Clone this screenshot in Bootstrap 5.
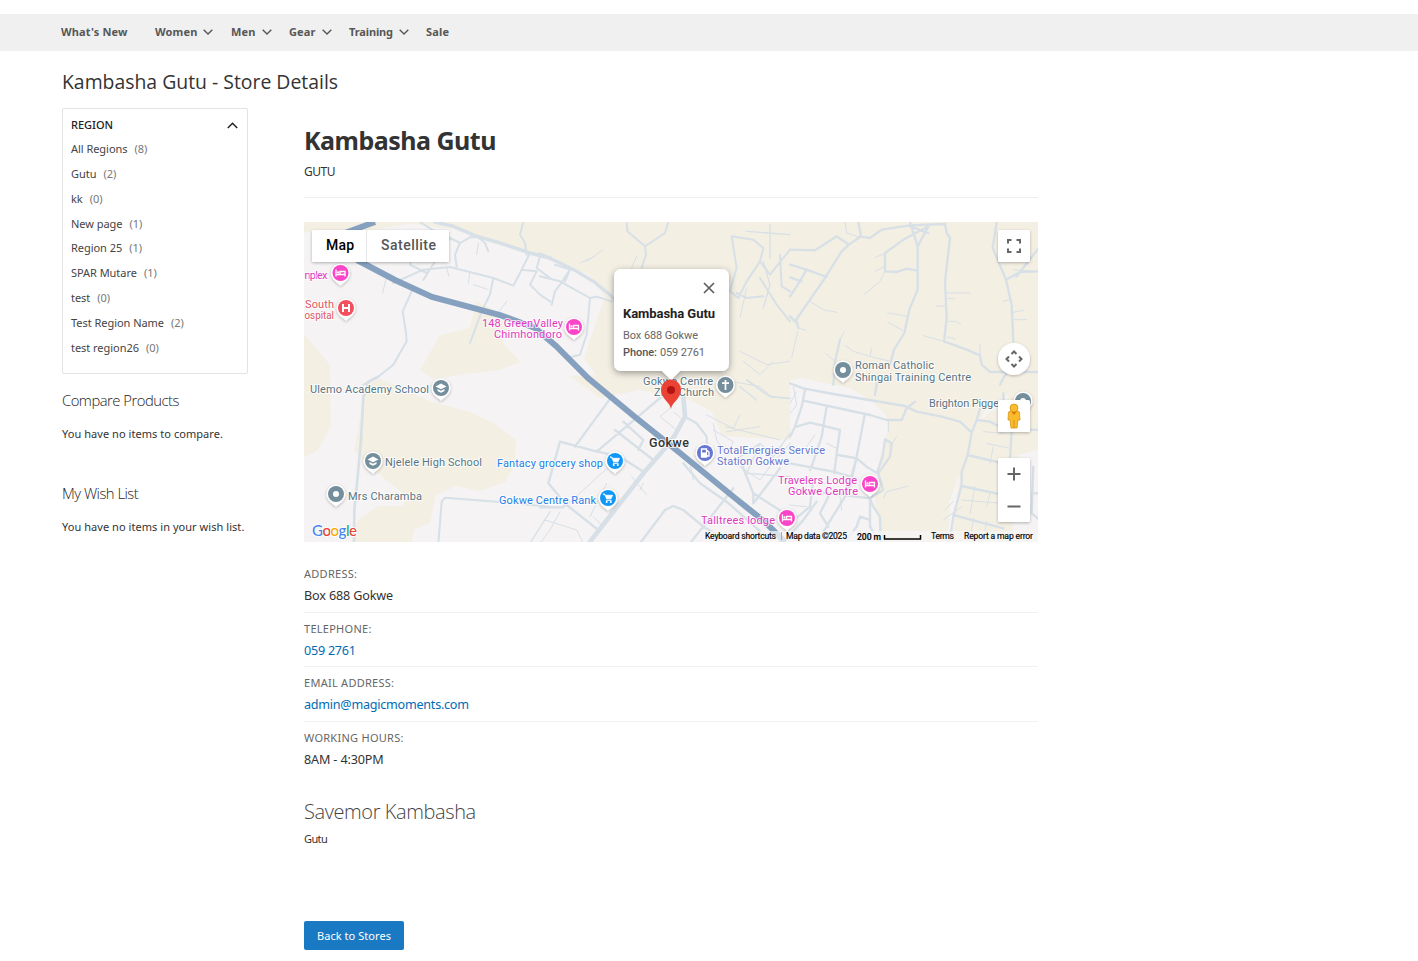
<!DOCTYPE html>
<html lang="en">
<head>
<meta charset="utf-8">
<title>Kambasha Gutu - Store Details</title>
<link rel="stylesheet" href="https://cdn.jsdelivr.net/npm/bootstrap@5.3.0/dist/css/bootstrap.min.css">
<style>
body{font:11px/16px "Noto Sans","Open Sans",sans-serif;color:#333;background:#fff;overflow:hidden}
.topnav{background:#f0f0f0;height:37px;margin-top:14px;padding:0 0 2px 61px;font-weight:700;color:#575757}
.topnav a{color:inherit;text-decoration:none;display:flex;align-items:center;letter-spacing:.15px}
.topnav svg{width:10px;height:6px;margin-left:6px}
.topnav .w-train{letter-spacing:-.12px}
.w-new{width:94px}.w-women{width:76px}.w-men{width:58px}.w-gear{width:60px}.w-train{width:77px}
.page-title{font:400 19.4px/30px "Open Sans","Noto Sans",sans-serif;letter-spacing:0;margin:16px 0 11px}
.wrap{padding-left:62px}
.side{width:186px;margin-right:56px}
.regions{border:1px solid #e3e3e3;border-radius:2px;height:266px;padding:8px;margin-bottom:14px}
.regions .hd{color:#222;font-weight:500;padding-right:1px}
.regions ul{list-style:none;padding:0;margin:4px 0 0}
.regions li{height:24.85px;line-height:24.85px;color:#444;letter-spacing:-.04px}
.regions li i{font-style:normal;color:#777;margin-left:7px}
.side h2{font:300 14.8px/24px "Open Sans","Noto Sans",sans-serif;letter-spacing:-.5px;margin:0 0 14px;color:#222}
.side p{margin:0;letter-spacing:.05px}
.side p.cmp{margin-bottom:39px}
.main{width:734px;padding-top:14px}
.main h1{font-size:25px;line-height:36px;font-weight:700;letter-spacing:-.5px;margin:0 0 3px}
.town{font-size:12px;line-height:20px;height:37px;letter-spacing:-.49px;padding-top:1px;border-bottom:1px solid #eee}
.mapbox{margin:24px 0 16px;height:320px;position:relative}
.fact{height:54.7px;border-bottom:1px solid #f1f1f1;padding-top:8px}
.fact:last-of-type{border:0}
.fact .k{color:#666;line-height:16px;letter-spacing:.27px}
.fact .v{font-size:12.6px;line-height:20px;margin-top:4px;letter-spacing:-.15px}
.fact .v a{color:#006bb4;text-decoration:none;letter-spacing:-.25px}
.sub{font:300 20px/32px "Open Sans","Noto Sans",sans-serif;letter-spacing:-.4px;color:#444;margin:19px 0 3px}
.sub-town{letter-spacing:-.6px}
.back{background:#1979c3;color:#fff;width:100px;height:29px;border-radius:2px;font-size:11px;line-height:29px;padding:0;border:0;margin-top:74px;letter-spacing:.05px}
.road{fill:none;stroke:#d7e0e6;stroke-linejoin:round;stroke-linecap:round}
.lbl{font:400 11px Roboto,sans-serif;paint-order:stroke;stroke:#fff;stroke-width:2px;stroke-opacity:.75}
.ctl{font-family:Roboto,sans-serif}
.foot{font:8.6px Roboto,sans-serif;fill:#000}
</style>
</head>
<body>
<nav class="topnav d-flex align-items-center">
<a class="w-new" href="#" >What's New</a>
<a class="w-women" href="#">Women<svg viewBox="0 0 10 6"><path d="M.7.7 5 5 9.3.7" fill="none" stroke="#575757" stroke-width="1.4"/></svg></a>
<a class="w-men" href="#">Men<svg viewBox="0 0 10 6"><path d="M.7.7 5 5 9.3.7" fill="none" stroke="#575757" stroke-width="1.4"/></svg></a>
<a class="w-gear" href="#">Gear<svg viewBox="0 0 10 6"><path d="M.7.7 5 5 9.3.7" fill="none" stroke="#575757" stroke-width="1.4"/></svg></a>
<a class="w-train" href="#">Training<svg viewBox="0 0 10 6"><path d="M.7.7 5 5 9.3.7" fill="none" stroke="#575757" stroke-width="1.4"/></svg></a>
<a href="#">Sale</a>
</nav>
<div class="wrap">
<div class="page-title">Kambasha Gutu - Store Details</div>
<div class="d-flex">
<aside class="side">
<div class="regions">
<div class="hd d-flex justify-content-between align-items-center">REGION<svg width="11" height="7" viewBox="0 0 11 7"><path d="M.8 6 5.500 1.300 10.200 6" fill="none" stroke="#222" stroke-width="1.5"/></svg></div>
<ul>
<li>All Regions<i>(8)</i></li><li>Gutu<i>(2)</i></li><li>kk<i>(0)</i></li><li>New page<i>(1)</i></li><li>Region 25<i>(1)</i></li><li>SPAR Mutare<i>(1)</i></li><li>test<i>(0)</i></li><li>Test Region Name<i>(2)</i></li><li>test region26<i>(0)</i></li>
</ul></div>
<h2>Compare Products</h2>
<p class="cmp">You have no items to compare.</p>
<h2>My Wish List</h2>
<p>You have no items in your wish list.</p>
</aside>
<main class="main">
<h1>Kambasha Gutu</h1>
<div class="town">GUTU</div>
<div class="mapbox">
<svg class="d-block" width="734" height="320" viewBox="304 222 734 320">
<defs>
<filter id="sh" x="-20%" y="-20%" width="140%" height="150%"><feDropShadow dx="0" dy="1" stdDeviation="1.500" flood-opacity=".28"/></filter>
<filter id="sh2" x="-20%" y="-20%" width="140%" height="150%"><feDropShadow dx="0" dy="2" stdDeviation="3.500" flood-opacity=".38"/></filter>
<path id="drop" d="M0 13C-2 10-9.500 7-9.500 0a9.500 9.500 0 1 1 19 0C9.500 7 2 10 0 13z" fill="#fff" filter="url(#sh)"/>
<g id="bed"><use href="#drop"/><circle r="8" fill="#fb45c8"/><path d="M-4.500-3.500V3.500M-4.500 1.500H4.500V3.500M4.500 1.500V-1.500H-.5V1M-2.500-.8v.1" fill="none" stroke="#fff" stroke-width="1.300"/><circle cx="-2.500" cy="-.7" r="1.100" fill="#fff"/></g>
<g id="school"><use href="#drop"/><circle r="8" fill="#748e9b"/><path d="M0-4.500-5.500-1.500 0 1.300 5.500-1.500z" fill="#fff"/><path d="M-3.500 1V3L0 4.800 3.500 3V1L0 2.800z" fill="#fff"/></g>
<g id="place"><use href="#drop"/><circle r="8" fill="#748e9b"/><circle r="3" fill="#fff"/></g>
<g id="shop"><use href="#drop"/><circle r="8" fill="#1198f6"/><path d="M-5-4H-3.200L-1.500.8H3L4.500-2.700H-2.500z" fill="#fff" stroke="#fff" stroke-width=".8"/><path d="M-2 2.300H3.500" stroke="#fff"/><circle cx="-1.300" cy="4" r="1" fill="#fff"/><circle cx="2.800" cy="4" r="1" fill="#fff"/></g>
</defs>
<rect x="304" y="222" width="734" height="320" fill="#f5f3f4"/>
<g fill="#f4efe3">
<path d="M304 222H420L358 232 304 232z"/>
<path d="M398 222H1038V450L1018 455 1012 542H952L960 470 972 430 990 412 1008 405V395L985 410 975 430 950 500 948 542H882L875 500 879 460 888 430 886 415 872 402 850 388 800 378 790 381V440L722 436 712 412 690 400 640 390 600 398 570 376 596 375 584 358 600 310 605 298 590 275 540 256 460 230z"/>
<path d="M304 334 330 365 331 425 318 450 304 457z"/>
<path d="M440 335 470 328 476 301 494 310 508 330 502 342 520 362 500 370 466 374 432 379 420 370z"/>
<path d="M366 385 380 379 432 402 470 412 495 424 516 440 515 465 505 482 480 491 456 486 436 495 430 523 414 530 412 542H352L358 520 378 506H404V494L380 475 362 460 354 450z"/>
</g>
<!-- north-west streets -->
<g class="road" transform="translate(300 218) scale(.33333)" stroke-width="6">
<path stroke-width="11" d="M405 12 460 25 530 55 600 75 690 105 750 120"/>
<path d="M280 195 370 155 450 147 580 180 640 203 665 155 690 105M360 12 420 50 450 60 480 75 465 110 470 145M480 75 510 58 535 58 555 75 565 100M370 75 340 100 330 140 380 165M450 60 370 185M335 220 308 280 318 345 320 370 280 440 230 480 190 500M580 180 570 230 545 280 510 375M670 12 660 50 675 75 680 110M720 115 710 150 750 180M665 155 710 160 690 200 720 230 750 250"/>
<path stroke-width="3" d="M260 175 248 225M440 150 447 175M510 160 505 195M535 75 530 110M620 250 590 290M565 215 520 200"/>
</g>
<!-- north-centre streets -->
<g class="road" transform="translate(540 218) scale(.33333)" stroke-width="6">
<path stroke-width="10" d="M0 108 60 135 110 160 160 190 215 235 245 275"/>
<path d="M260 12 262 40 315 85 318 110 305 150M315 85 375 45 385 12M45 140 90 155 60 200 45 220 35 260M0 175 60 190 150 240 140 350 120 410 80 420M90 155 75 190M150 240 170 236 215 250M575 55 640 65 670 90 660 130 620 190 595 240 570 220 590 150 575 55M660 130 690 170 750 95M720 110 725 205 750 220M670 235 620 240 590 225M660 180 710 260 750 310"/>
<path stroke-width="4" d="M620 40 750 50M690 20 690 120M670 130 690 200 670 270"/>
<path stroke-width="3" d="M190 95 140 130M165 115 120 135M290 115 275 150M620 210 600 300M600 400 680 440 750 430M610 430 660 470 700 430"/>
</g>
<!-- north-east streets -->
<g class="road" transform="translate(790 218) scale(.33333)" stroke-width="7">
<path d="M0 95 75 97 140 55 177 80M210 55 240 60 275 35 360 22 465 18 470 45 480 60 465 190 470 300 462 370 530 395 570 412 575 440 600 462H750M205 12 213 55 177 80 155 100 105 180 60 245 15 310M0 140 50 155 110 177M50 155 20 205 0 235M0 178 35 190M415 25 345 62 285 105V160L320 162 350 152 383 158M360 12 383 85V215L358 275 343 345 312 395 300 440M415 25 383 85M360 25 415 45M620 12 608 90 648 185 665 260 670 370M750 160 690 162 648 185M680 175 750 85M15 310 0 295M150 365 135 430 130 500M670 440 640 480 630 500M20 310 25 330"/>
<path stroke-width="3" d="M165 12 170 45 210 58M60 250 100 275 140 283M285 160 270 190 222 230M255 118 290 105M255 160 285 145M470 225H540M470 242H493M438 264H465M293 285 350 294M293 312 340 338M470 310H500L512 320M470 357 497 363M400 353 462 370M165 382 190 400 240 415 300 430M163 340 150 365M105 405 135 430M25 330 48 337M23 340 5 420M245 390 240 415M570 380V410M670 155 730 160M640 250 660 245M670 283 700 277M670 305H710"/>
</g>
<!-- south-west streets -->
<g class="road" transform="translate(300 380) scale(.33333)" stroke-width="6">
<path stroke-width="8" d="M235-10 205 5 190 50 183 180 172 300 163 390 162 490"/><path d="M415 490 425 365 435 353 590 365 750 380"/><path stroke-width="4" d="M750 395 690 490"/>
</g>
<!-- town centre streets -->
<g class="road" transform="translate(540 380) scale(.33333)" stroke-width="7">
<path stroke-width="14" d="M375 205 310 280 150 485M430 50 435 110 405 165 375 205"/>
<path d="M215 50 105 200M365 50 170 215M250 125 310 180 295 210M225 150 340 240M60 185 160 212 240 230 310 275M60 185 25 310 80 375 175 450M0 382H70L85 360M435 110 470 130 500 170 500 190M300 490 375 390 400 378 430 390 490 440 560 480M580 325 450 490M430 250 480 310 560 365 690 480M600 240 640 340V370M720 265 640 370M640 340 750 410"/>
<path stroke-width="3" d="M240 230 80 375M60 395 30 450 0 490M15 420 110 450 130 490M275 290 320 345M310 310 300 330M150 410 180 350 200 310M160 410 190 440M390 85 360 110 410 150M400 95 430 120M500 105 580 145M520 150 580 185 570 210M560 155 660 140M555 140 720 180M580 5 660 20 700 55M750 190 690 260 660 300 600 260M600 105 580 145M520 130 530 180 550 210M450 250 460 300"/>
<path d="M620 0 690 50 750 55" stroke-width="5"/><path stroke-width="4" d="M600 230 660 190 700 230 750 160M660 190 620 280 750 290M650 60 600 20"/>
</g>
<!-- south-east streets -->
<g class="road" transform="translate(790 380) scale(.33333)" stroke-width="7">
<path d="M0 10 40 25 130 42 345 78 380 95 455 110 510 125 545 158 533 225 515 275V315L490 410 478 490M40 62 240 105 290 120H335L350 85 375 65M45 30 35 80 15 140 0 170M110 80 95 170 65 260 60 270M0 250 130 275 200 295M20 140 60 128 110 140 150 150 140 220 133 280M225 100 200 230 180 320M145 225 200 235 230 260 262 280M262 0 255 45M285 178 305 190 300 230 265 280 280 330 240 355 0 325M285 178 278 230 262 275M240 355 250 380 270 410 272 490M240 360V440L265 480M533 225 660 255M515 318 640 345M490 405 640 445M545 158 560 120 600 125 640 145 750 150M560 120 570 85M200 235 165 350 100 455M0 430 60 380 70 300M80 365 40 420 5 460M120 340 90 400 115 440M665 150 660 240M640 40 645 150M200 440 210 410 240 420"/>
<path stroke-width="3" d="M280 355 290 335 355 318M295 120V155M320 170 300 200M75 165 50 200M110 190 140 205M580 155 640 160M590 190 660 205M610 200 600 250M515 360 635 370M515 380 460 420M490 365 465 390M555 320 540 400M600 340 590 380M0 375 50 380M150 350 155 390M550 415 540 480M590 425 580 480M10 20 20 75 0 100M20 35 0 70"/>
<path d="M730 260 725 400 750 420M725 340H750M170 480 200 440"/>
</g>
<!-- trunk road -->
<path d="M345 233 375 222M357 260 395 280 432 297 500 315 535 328 556 346 588 378 635 417 680 453 735 498 765 522 785 542" fill="none" stroke="#86a1bf" stroke-width="6"/>
<!-- labels -->
<g class="lbl">
<g fill="#e137c0"><text x="304.500" y="279" textLength="23">nplex</text><text x="482" y="327" textLength="81">148 GreenValley</text><text x="494" y="338" textLength="68">Chimhondoro</text><text x="778" y="484" textLength="79">Travelers Lodge</text><text x="788" y="495" textLength="70">Gokwe Centre</text><text x="701" y="524" textLength="74">Talltrees lodge</text></g>
<g fill="#e15663"><text x="305" y="308" textLength="29">South</text><text x="304.500" y="319" textLength="29.500" lengthAdjust="spacingAndGlyphs">ospital</text></g>
<g fill="#587583"><text x="310" y="393" textLength="119">Ulemo Academy School</text><text x="385" y="466" textLength="97">Njelele High School</text><text x="348" y="500" textLength="74">Mrs Charamba</text><text x="643" y="385" textLength="70">Gokwe Centre</text><text x="654" y="396" textLength="60">Zion Church</text><text x="855" y="369" textLength="79">Roman Catholic</text><text x="855" y="381" textLength="116">Shingai Training Centre</text><text x="929" y="407" textLength="70">Brighton Pigge</text></g>
<g fill="#267ee8"><text x="497" y="467" textLength="106">Fantacy grocery shop</text><text x="499" y="504" textLength="97">Gokwe Centre Rank</text></g>
<g fill="#6976cc"><text x="717" y="454" textLength="108">TotalEnergies Service</text><text x="717" y="465" textLength="72">Station Gokwe</text></g>
<text x="649" y="447" textLength="40" fill="#333" style="font-size:12.5px;font-weight:500">Gokwe</text>
</g>
<use href="#bed" x="340.500" y="273"/><use href="#bed" x="574" y="327"/><use href="#bed" x="870" y="484"/><use href="#bed" x="787" y="518"/>
<g transform="translate(346 308)"><use href="#drop"/><circle r="8" fill="#f2505e"/><path d="M-3-4V4M3-4V4M-3 0H3" stroke="#fff" stroke-width="2"/></g>
<use href="#school" x="441" y="388"/><use href="#school" x="373" y="461"/>
<use href="#place" x="336" y="494"/><use href="#place" x="843" y="370"/><use href="#place" x="1023" y="401"/>
<use href="#shop" x="615" y="461"/><use href="#shop" x="608" y="498"/>
<g transform="translate(725.500 385)"><use href="#drop"/><circle r="8" fill="#748e9b"/><path d="M0-5V5M-3.500-1.800H3.500" stroke="#fff" stroke-width="1.700"/></g>
<g transform="translate(705 453)"><use href="#drop"/><circle r="8" fill="#6976d0"/><path d="M-3.500-4H1.500V4H-3.500zM1.500-3 4-1V3H1.500" fill="none" stroke="#fff" stroke-width="1.300"/><path d="M-3-.5H1V4H-3z" fill="#fff"/></g>
<!-- selected store -->
<g filter="url(#sh2)"><path d="M621 269H722a7 7 0 0 1 7 7V364a7 7 0 0 1-7 7H680L671 380 662 371H621a7 7 0 0 1-7-7V276a7 7 0 0 1 7-7z" fill="#fff"/></g>
<path d="M671 409C670 402 661 399 661 389.500a10 10 0 0 1 20 0C681 399 672 402 671 409z" fill="#ea4335"/><circle cx="671" cy="390" r="4" fill="#b31412"/>
<path d="M704 283 714 293M714 283 704 293" stroke="#5f5f5f" stroke-width="1.700"/>
<g class="ctl"><text x="623" y="318" font-size="13" font-weight="700" fill="#222" textLength="92">Kambasha Gutu</text><text x="623" y="339" font-size="11" fill="#666" textLength="75">Box 688 Gokwe</text><text x="623" y="356" font-size="11" fill="#555" textLength="34" font-weight="500">Phone:</text><text x="660" y="356" font-size="11" fill="#666" textLength="45">059 2761</text></g>
<!-- map controls -->
<g filter="url(#sh)" fill="#fff"><rect x="312" y="230" width="137" height="32" rx="1.500"/><rect x="998" y="230" width="32" height="32" rx="1.500"/><circle cx="1014" cy="359" r="16"/><rect x="998" y="400" width="32" height="32" rx="1.500"/><rect x="998" y="458" width="32" height="64" rx="1.500"/></g>
<path d="M366.500 230V262" stroke="#e8e8e8"/>
<g class="ctl" font-size="14" font-weight="500"><text x="326" y="250" textLength="28" fill="#000">Map</text><text x="381" y="250" textLength="55" fill="#565656">Satellite</text></g>
<g fill="none" stroke="#666" stroke-width="2"><path d="M1008 243.500V240H1011.500M1016.500 240H1020V243.500M1020 248.500V252H1016.500M1011.500 252H1008V248.500"/><path d="M1011.500 354 1014 351.500 1016.500 354M1011.500 364 1014 366.500 1016.500 364M1009 356.500 1006.500 359 1009 361.500M1019 356.500 1021.500 359 1019 361.500"/><path d="M1007.500 474H1020.500M1014 467.500V480.500M1007.500 506.500H1020.500"/></g>
<path d="M1008.500 412Q1014 408.500 1019.500 412L1020 420H1018L1017 428H1011L1010 420H1008z" fill="#fbbc2b" stroke="#d5941c" stroke-width=".8"/><path d="M1011 411.500H1017L1014 415z" fill="#e8710a"/><path d="M1014 420V428" stroke="#d5941c"/><circle cx="1014" cy="408" r="4" fill="#fbbc2b" stroke="#d5941c" stroke-width=".8"/>
<!-- attribution -->
<rect x="704" y="531" width="334" height="11" fill="#f5f5f5" opacity=".75"/>
<g class="foot" stroke="#000" stroke-width=".15"><text x="705" y="539" textLength="71">Keyboard shortcuts</text><text x="786" y="539" textLength="61">Map data ©2025</text><text x="857" y="540" textLength="24" font-weight="500">200 m</text><text x="931" y="539" textLength="23">Terms</text><text x="964" y="539" textLength="69">Report a map error</text></g>
<path d="M781.500 532V540" stroke="#aaa"/><path d="M884.500 535V539H920.500V535" fill="none" stroke="#000" stroke-width="1.500"/>
<text x="312" y="536" textLength="45" style="font:500 15px Lato,sans-serif;paint-order:stroke" stroke="#fff" stroke-width="1.500"><tspan fill="#4285f4">G</tspan><tspan fill="#ea4335">o</tspan><tspan fill="#fbab05">o</tspan><tspan fill="#4285f4">g</tspan><tspan fill="#34a853">l</tspan><tspan fill="#ea4335">e</tspan></text>
</svg>
</div>
<section class="fact"><div class="k">ADDRESS:</div><div class="v">Box 688 Gokwe</div></section>
<section class="fact"><div class="k">TELEPHONE:</div><div class="v"><a href="#">059 2761</a></div></section>
<section class="fact"><div class="k">EMAIL ADDRESS:</div><div class="v"><a href="#">admin@magicmoments.com</a></div></section>
<section class="fact"><div class="k">WORKING HOURS:</div><div class="v">8AM - 4:30PM</div></section>
<div class="sub">Savemor Kambasha</div>
<div class="sub-town">Gutu</div>
<button class="btn back d-block">Back to Stores</button>
</main>
</div></div>
<script src="https://cdn.jsdelivr.net/npm/bootstrap@5.3.0/dist/js/bootstrap.bundle.min.js"></script>
</body>
</html>
